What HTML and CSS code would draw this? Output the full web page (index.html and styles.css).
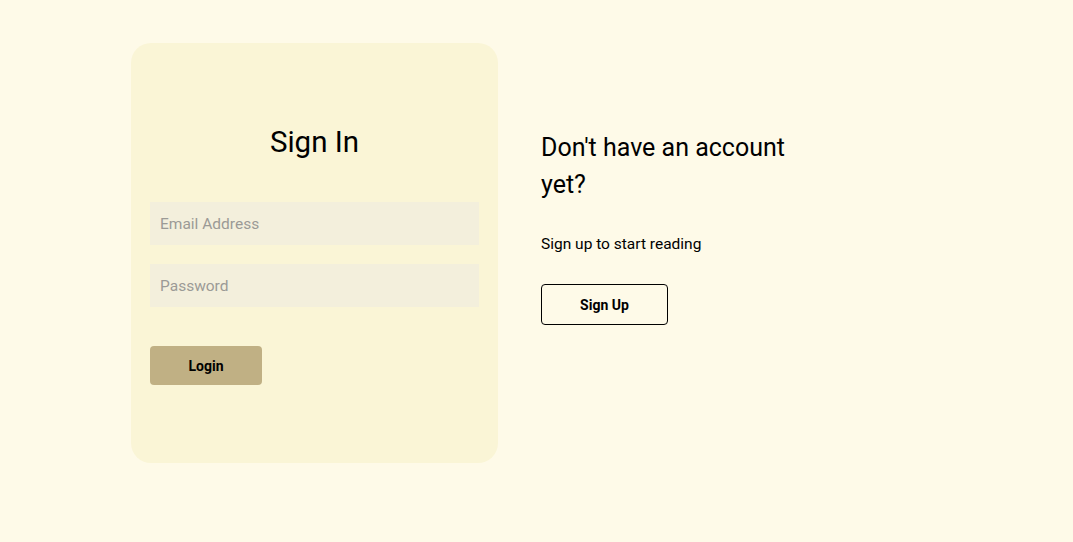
FILE: index.html
```html
<!DOCTYPE html>
<html>
<head>
<meta charset="utf-8">
<link rel="stylesheet" href="styles.css">
</head>
<body>
<div class="page">
  <div class="card">
    <h1 class="title">Sign In</h1>
    <div class="field"><span class="ph">Email Address</span></div>
    <div class="field"><span class="ph">Password</span></div>
    <button class="login">Login</button>
  </div>
  <div class="side">
    <h2 class="side-title">Don't have an account yet?</h2>
    <p class="side-text">Sign up to start reading</p>
    <button class="signup">Sign Up</button>
  </div>
</div>
</body>
</html>
```
FILE: styles.css
```css
html, body {
  margin: 0;
  padding: 0;
  background: #fefae8;
  font-family: Roboto, "Liberation Sans", sans-serif;
  color: #000;
}
.page {
  display: flex;
  align-items: flex-start;
  gap: 43px;
  padding: 43px 0 0 131px;
  height: 542px;
  box-sizing: border-box;
}
.card {
  width: 367px;
  height: 420px;
  box-sizing: border-box;
  background: #faf5d6;
  border-radius: 20px;
  padding: 81px 19px 0 19px;
  display: flex;
  flex-direction: column;
}
.title {
  margin: 0 0 42px 0;
  font-size: 29.5px;
  font-weight: 400;
  line-height: 36px;
  text-align: center;
}
.field {
  height: 43px;
  background: #f3efdc;
  display: flex;
  align-items: center;
  padding-left: 10px;
  margin-bottom: 19px;
}
.ph {
  font-size: 15.5px;
  color: #9b9a96;
}
.login {
  margin-top: 20px;
  width: 112px;
  height: 39px;
  border: none;
  border-radius: 4px;
  background: #c0b084;
  font-family: Roboto, "Liberation Sans", sans-serif;
  font-weight: 700;
  font-size: 14px;
  color: #000;
  padding: 0;
}
.side {
  width: 280px;
  padding-top: 86px;
}
.side-title {
  margin: 0;
  font-size: 25px;
  font-weight: 400;
  line-height: 37px;
}
.side-text {
  margin: 32px 0 0 0;
  font-size: 15.5px;
  line-height: 18px;
}
.signup {
  margin-top: 31px;
  width: 127px;
  height: 41px;
  border: 1px solid #000;
  border-radius: 4px;
  background: transparent;
  font-family: Roboto, "Liberation Sans", sans-serif;
  font-weight: 700;
  font-size: 14px;
  color: #000;
  padding: 0;
}
```
